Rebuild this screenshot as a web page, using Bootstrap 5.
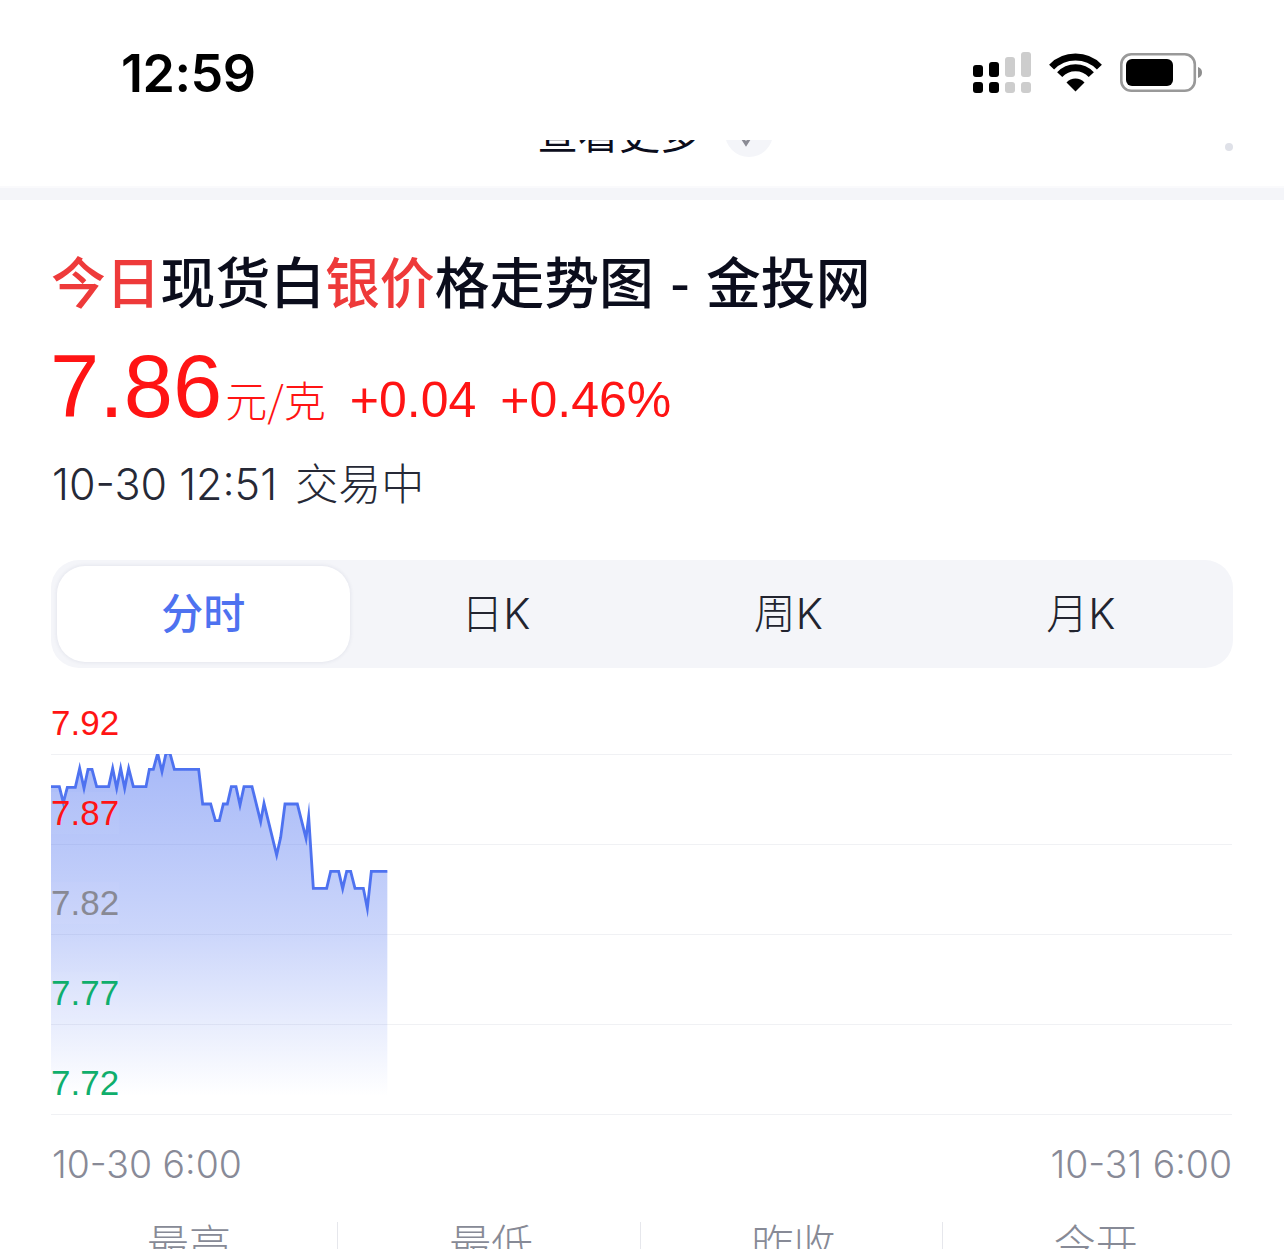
<!DOCTYPE html>
<html lang="zh-CN">
<head>
<meta charset="utf-8">
<title>今日现货白银价格走势图 - 金投网</title>
<link href="https://cdn.jsdelivr.net/npm/bootstrap@5.3.0/dist/css/bootstrap.min.css" rel="stylesheet">
<style>
html,body{height:1249px;overflow:hidden;background:#fff}
body{font-family:Inter,"Noto Sans CJK SC",sans-serif;color:#0b0d1c}
.status-bar{height:140px;padding:0 80px 0 121px;background:#fff;position:relative;z-index:2}
.clock{font-size:52px;font-weight:600;color:#000;line-height:1;margin-top:48px;letter-spacing:-.5px}
.status-icons{margin-top:52px}
.more-row{height:46px;overflow:hidden;position:relative}
.more-inner{height:48px;margin-top:-31px;padding-left:26px}
.more-text{font-size:41px;line-height:46px;color:#0b0d1c;margin-top:1px}
.more-circle{width:48px;height:48px;border-radius:50%;background:#f4f5f9;margin-left:24px}
.more-circle svg{display:block}
.more-dot{position:absolute;left:1225px;top:3px;width:8px;height:8px;border-radius:50%;background:#dfe1e8}
.sep-band{height:14px;background:#f4f5f9;border-top:2px solid #fafafc}
.main-pane{padding:0 52px}
.page-title{font-family:"Noto Sans CJK SC",Inter,sans-serif;font-size:54.8px;font-weight:500;line-height:70px;margin:44px 0 0 -1px;color:#0b0d1c;white-space:nowrap;word-spacing:4px}
.title-hl{color:#ee3a3a}
.price-row{height:90px;margin:28px 0 0 -2px;color:#ff1414;white-space:nowrap;font-family:"Liberation Sans","Noto Sans CJK SC",sans-serif}
.price-main{font-size:88.500px;line-height:90px}
.price-unit{font-size:42px;font-weight:300;font-family:"Noto Sans CJK SC",sans-serif;margin-left:3px}
.price-chg{font-size:50px;margin-left:24px}
.quote-time{font-size:43px;font-weight:300;color:#262936;line-height:50px;margin-top:27px}
.quote-state{margin-left:6px}
.range-tabs{height:108px;margin:51px -1px 0 -1px;padding:6px;background:#f4f5f9;border-radius:28px}
.range-tab{flex:1 1 0;font-size:42px;font-weight:300;color:#22242f;border-radius:28px;line-height:96px;text-align:center}
.range-tab.on{color:#4e72f0;font-weight:500;background:#fff;box-shadow:0 0 4px rgba(30,40,90,.10)}
.chart-box{position:relative;margin:0 0 0 -1px}
.grid-row{height:90px;border-bottom:1px solid #f0f1f4;padding-bottom:10px}
.grid-row.first{height:87px;padding-bottom:10px}
.grid-label{font-family:"Liberation Sans",sans-serif;font-size:35px;line-height:42px;background:rgba(255,255,255,.04);position:relative;z-index:1}
.lv-red{color:#ff1414}.lv-gray{color:#888994}.lv-green{color:#0fae6c}
.chart-svg{position:absolute;left:0;top:86px}
.axis-row{font-size:37.400px;font-weight:300;color:#888a97;line-height:44px;margin-top:28px}
.stat-row{margin:35px -12px 0 -16px}
.stat-cell{flex:1 1 0;height:60px;text-align:center;font-size:42px;font-weight:300;color:#878a96;line-height:46px;padding-left:5px;border-right:1px solid #e6e7ec}
.stat-cell:last-child{border-right:0}
</style>
</head>
<body>
<div class="status-bar d-flex justify-content-between align-items-start">
  <div class="clock">12:59</div>
  <svg class="status-icons" width="231" height="42" viewBox="973 52 231 42" aria-hidden="true">
    <g fill="#000">
      <rect x="973" y="65" width="10" height="12" rx="3"/><rect x="973" y="82" width="10" height="11" rx="3"/>
      <rect x="989" y="62" width="10" height="15" rx="3"/><rect x="989" y="82" width="10" height="11" rx="3"/>
    </g>
    <g fill="#cdcdcd">
      <rect x="1005" y="57" width="10" height="20" rx="3"/><rect x="1005" y="82" width="10" height="11" rx="3"/>
      <rect x="1021" y="52" width="10" height="25" rx="3"/><rect x="1021" y="82" width="10" height="11" rx="3"/>
    </g>
    <g fill="none" stroke="#000" stroke-width="7">
      <path d="M1051.6 67.1A33.5 33.5 0 0 1 1099.4 67.1"/>
      <path d="M1059.7 74.6A21.5 21.5 0 0 1 1091.3 74.6"/>
    </g>
    <path d="M1066.5 82.5A12 12 0 0 1 1084.5 82.5L1075.5 91.5Z" fill="#000"/>
    <rect x="1121.3" y="54.3" width="73.5" height="36.5" rx="10" fill="none" stroke="#999" stroke-width="2.6"/>
    <rect x="1126" y="59" width="47" height="27" rx="6" fill="#000"/>
    <path d="M1198 67C1201 68 1202 70 1202 72.500C1202 75 1201 77 1198 78Z" fill="#8e8e8e"/>
  </svg>
</div>

<div class="more-row">
  <div class="more-inner d-flex justify-content-center align-items-center">
    <span class="more-text">查看更多</span>
    <span class="more-circle">
      <svg width="48" height="48" viewBox="0 0 48 48" aria-hidden="true"><path d="M14 24L21 35L28 24" fill="none" stroke="#8a8b94" stroke-width="3"/></svg>
    </span>
  </div>
  <span class="more-dot"></span>
</div>
<div class="sep-band"></div>

<main class="main-pane">
  <h1 class="page-title"><span class="title-hl">今日</span>现货白<span class="title-hl">银价</span>格走势图 - 金投网</h1>
  <div class="price-row d-flex align-items-baseline">
    <span class="price-main">7.86</span><span class="price-unit">元/克</span><span class="price-chg">+0.04</span><span class="price-chg">+0.46%</span>
  </div>
  <div class="quote-time">10-30 12:51 <span class="quote-state">交易中</span></div>

  <div class="range-tabs d-flex">
    <div class="range-tab on">分时</div>
    <div class="range-tab">日K</div>
    <div class="range-tab">周K</div>
    <div class="range-tab">月K</div>
  </div>

  <div class="chart-box">
    <div class="grid-row first d-flex align-items-end"><span class="grid-label lv-red">7.92</span></div>
    <div class="grid-row d-flex align-items-end"><span class="grid-label lv-red">7.87</span></div>
    <div class="grid-row d-flex align-items-end"><span class="grid-label lv-gray">7.82</span></div>
    <div class="grid-row d-flex align-items-end"><span class="grid-label lv-green">7.77</span></div>
    <div class="grid-row d-flex align-items-end"><span class="grid-label lv-green">7.72</span></div>
    <svg class="chart-svg" width="340" height="360" viewBox="33 162 1020 1080" aria-hidden="true">
      <defs>
        <linearGradient id="areaFill" x1="0" y1="0" x2="0" y2="1">
          <stop offset="0" stop-color="#4e72f0" stop-opacity=".5"/>
          <stop offset=".5" stop-color="#4e72f0" stop-opacity=".29"/>
          <stop offset=".95" stop-color="#4e72f0" stop-opacity="0"/>
        </linearGradient>
      </defs>
      <path fill="url(#areaFill)" d="M33 260H58L70 308L82 262H106L119 205L132 265L144 208H156L170 260H206L218 205L230 265L242 205L254 265L266 205L280 260H318L328 208H340L353 160L366 215L378 160H390L403 208H476L488 312H512L526 362H538L550 312H562L574 260H588L600 315L612 260H636L662 365L672 310L710 465L722 412L735 312H772L798 415L806 350L820 565H860L872 514H896L908 566L920 514H932L945 565H970L982 625L994 514H1042V1242H33Z"/>
      <path fill="none" stroke="#4e72f0" stroke-width="8.500" stroke-linejoin="miter" stroke-miterlimit="20" d="M33 260H58L70 308L82 262H106L119 205L132 265L144 208H156L170 260H206L218 205L230 265L242 205L254 265L266 205L280 260H318L328 208H340L353 160L366 215L378 160H390L403 208H476L488 312H512L526 362H538L550 312H562L574 260H588L600 315L612 260H636L662 365L672 310L710 465L722 412L735 312H772L798 415L806 350L820 565H860L872 514H896L908 566L920 514H932L945 565H970L982 625L994 514H1042"/>
    </svg>
  </div>

  <div class="axis-row d-flex justify-content-between"><span>10-30 6:00</span><span>10-31 6:00</span></div>
  <div class="stat-row d-flex">
    <div class="stat-cell">最高</div>
    <div class="stat-cell">最低</div>
    <div class="stat-cell">昨收</div>
    <div class="stat-cell">今开</div>
  </div>
</main>
<script src="https://cdn.jsdelivr.net/npm/bootstrap@5.3.0/dist/js/bootstrap.bundle.min.js"></script>
</body>
</html>
